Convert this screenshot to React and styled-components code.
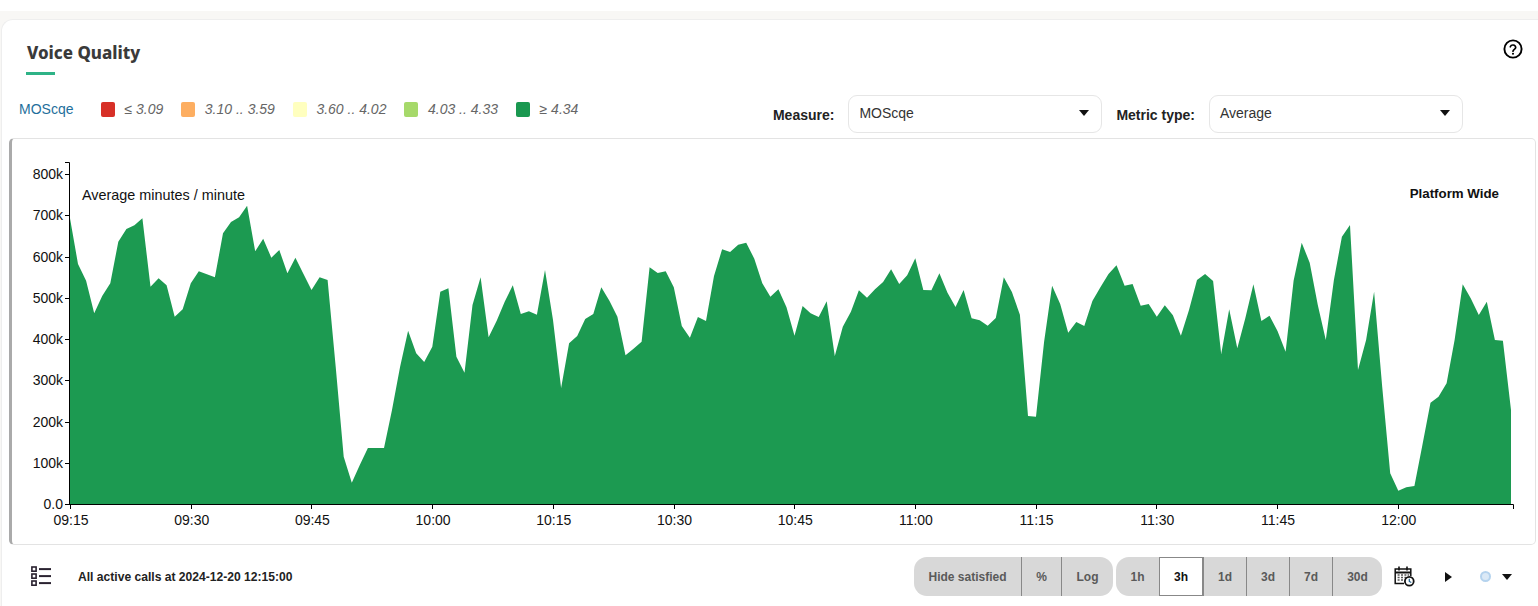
import styled, { createGlobalStyle } from "styled-components";

// ====== DATA ======
const tickLabels = ["09:15", "09:30", "09:45", "10:00", "10:15", "10:30", "10:45", "11:00", "11:15", "11:30", "11:45", "12:00"];
const yLabels = ["800k", "700k", "600k", "500k", "400k", "300k", "200k", "100k", "0.0"];

// one sample a minute, measured as 1/3 px below the top of the reference plot
const samples = [
  85, 222, 272, 370, 318, 280, 155, 117, 106, 85, 290, 265, 286, 380, 358, 280, 244, 253, 262, 130, 96, 82, 47, 184,
  146, 203, 180, 250, 203, 252, 300, 262, 270, 530, 800, 878, 825, 774, 774, 774, 660, 530, 422, 490, 516, 470, 305,
  295, 500, 548, 345, 262, 442, 392, 335, 286, 372, 364, 374, 240, 390, 594, 460, 438, 387, 372, 292, 332, 380, 496,
  476, 455, 232, 249, 244, 292, 408, 443, 381, 393, 258, 178, 186, 164, 158, 206, 280, 320, 298, 352, 437, 348, 370,
  381, 334, 498, 410, 365, 301, 323, 298, 276, 238, 282, 256, 205, 300, 301, 250, 308, 351, 300, 385, 391, 407, 384,
  262, 306, 374, 678, 680, 455, 287, 342, 428, 396, 408, 333, 292, 252, 226, 287, 282, 347, 342, 380, 346, 376, 437,
  360, 270, 252, 273, 492, 358, 475, 385, 283, 393, 377, 423, 485, 272, 158, 218, 345, 450, 270, 140, 105, 540, 450,
  305, 590, 850, 902, 892, 888, 765, 638, 620, 580, 450, 283, 325, 375, 335, 450, 452, 660,
];

const legend = [
  { color: "#d73027", label: "≤ 3.09" },
  { color: "#fdae61", label: "3.10 .. 3.59" },
  { color: "#ffffbf", label: "3.60 .. 4.02" },
  { color: "#a6d96a", label: "4.03 .. 4.33" },
  { color: "#1a9850", label: "≥ 4.34" },
];

// chart geometry, in svg pixels
const CHART_W = 1523;
const CHART_H = 404;
const LEFT = 58;
const BASE = 365;
const STEP_X = 8.05;
const TICK_X = 120.7;
const STEP_Y = 41.25;
const RIGHT = 1501;

const areaPoints = () => {
  const pts = samples.map((s, i) => `${(LEFT + i * STEP_X).toFixed(1)},${(51 + s / 3).toFixed(1)}`);
  const lastX = (LEFT + (samples.length - 1) * STEP_X).toFixed(1);
  return `${LEFT},${BASE} ${pts.join(" ")} ${lastX},${BASE}`;
};

// ====== STYLED COMPONENTS ======
const GlobalStyle = createGlobalStyle`
  html, body {
    margin: 0;
    padding: 0;
    background: #ffffff;
    overflow: hidden;
  }
  * {
    box-sizing: border-box;
  }
`;

const Page = styled.div`
  width: 1538px;
  height: 606px;
  padding-top: 11px;
  overflow: hidden;
  font-family: "Liberation Sans", Arial, sans-serif;
`;

const Shell = styled.div`
  height: 595px;
  padding: 8px 0 0 1px;
  background: #f8f7f5;
`;

const Card = styled.section`
  height: 587px;
  background: #ffffff;
  border-top: 1px solid #eeeeee;
  border-left: 1px solid #eeeeee;
  border-top-left-radius: 12px;
  display: flex;
  flex-direction: column;
`;

const Header = styled.header`
  height: 75px;
  padding: 20px 15px 0 25px;
  display: flex;
  justify-content: space-between;
  align-items: flex-start;
`;

const TitleBlock = styled.div`
  display: flex;
  flex-direction: column;
`;

const Title = styled.h1`
  margin: 0;
  font-family: "Noto Sans", sans-serif;
  font-size: 16.9px;
  line-height: 26px;
  font-weight: 800;
  color: #3a3a3a;
`;

const Underline = styled.div`
  width: 29px;
  height: 3px;
  margin: 6px 0 0 -1px;
  background: #2eb387;
`;

const HelpButton = styled.div`
  width: 20px;
  height: 20px;
  margin-top: -1px;
  color: #000000;
`;

const FilterRow = styled.div`
  height: 38px;
  display: flex;
  align-items: flex-start;
  padding-right: 75px;
`;

const Legend = styled.div`
  display: flex;
  align-items: center;
  height: 28px;
  padding-left: 17px;
  font-size: 14px;
`;

const LegendTitle = styled.span`
  width: 82px;
  color: #1f6f9c;
`;

const LegendItem = styled.div`
  display: flex;
  align-items: center;
  gap: 9.5px;
  margin-right: 18px;
  font-size: 14px;
  font-style: italic;
  color: #666666;
`;

const Swatch = styled.span`
  width: 14px;
  height: 15px;
  margin-top: 1px;
  border-radius: 2px;
  background: ${({ $color }) => $color};
`;

const Filters = styled.div`
  margin-left: auto;
  display: flex;
  align-items: center;
`;

const FilterLabel = styled.label`
  font-size: 14px;
  font-weight: 700;
  color: #222222;
  margin-top: 2px;
  margin-right: 14px;
`;

const Select = styled.div`
  width: 254px;
  height: 38px;
  margin-right: 14px;
  padding: 0 12px 2px 10px;
  border: 1px solid #e6e6e6;
  border-radius: 9px;
  display: flex;
  align-items: center;
  justify-content: space-between;
  font-size: 14px;
  color: #333333;

  &:last-child {
    margin-right: 0;
  }
`;

const Caret = styled.span`
  width: 0;
  height: 0;
  border-left: 5px solid transparent;
  border-right: 5px solid transparent;
  border-top: 6px solid #111111;
`;

const ChartCard = styled.div`
  width: 1527px;
  height: 407px;
  margin: 5px 0 0 7px;
  background: #ffffff;
  border: 1px solid #e3e3e3;
  border-left: 3px solid #aaaaaa;
  border-radius: 5px;
  overflow: hidden;
`;

const ChartSvg = styled.svg`
  display: block;
  font-family: "Liberation Sans", Arial, sans-serif;
  font-size: 14px;
  fill: #111111;
`;

const Footer = styled.footer`
  flex: 1;
  display: flex;
  align-items: center;
  padding: 2px 26px 0 29px;
  height: 58px;
`;

const ListIcon = styled.svg`
  display: block;
  margin-top: -2px;
  margin-right: 27px;
  color: #2a2230;
`;

const StatusText = styled.span`
  font-size: 12.1px;
  font-weight: 700;
  color: #222222;
`;

const Controls = styled.div`
  margin-left: auto;
  display: flex;
  align-items: center;
`;

const ButtonGroup = styled.div`
  height: 39px;
  margin-right: 3px;
  display: flex;
  background: #d8d8d8;
  border-radius: 13px;
  overflow: hidden;
`;

const GroupButton = styled.div`
  width: ${({ $width }) => $width}px;
  display: flex;
  align-items: center;
  justify-content: center;
  font-size: 12px;
  font-weight: 700;
  color: ${({ $active }) => ($active ? "#111111" : "#5a5a5a")};
  background: ${({ $active }) => ($active ? "#ffffff" : "transparent")};
  border: ${({ $active }) => ($active ? "1px solid #888888" : "none")};
  border-left: 1px solid #888888;

  &:first-child {
    border-left: none;
  }
`;

const IconButton = styled.div`
  display: flex;
  align-items: center;
  margin-left: ${({ $gap }) => $gap}px;
`;

const PlayMark = styled.span`
  width: 0;
  height: 0;
  border-top: 5.5px solid transparent;
  border-bottom: 5.5px solid transparent;
  border-left: 7px solid #111111;
`;

const StatusDot = styled.span`
  width: 11px;
  height: 11px;
  border-radius: 50%;
  background: #dbe9f6;
  border: 2px solid #b5d3ee;
`;

// ====== COMPONENTE ======
const HelpIcon = () => (
  <svg width="20" height="20" viewBox="0 0 20 20" fill="none" stroke="currentColor">
    <circle cx="10" cy="10" r="8.6" strokeWidth="1.9" />
    <path d="M7.3 7.8a2.8 2.8 0 0 1 5.4.7c0 1.7-2.7 2-2.7 3.7" strokeWidth="1.7" strokeLinecap="round" />
    <circle cx="10" cy="14.8" r="1.05" fill="currentColor" stroke="none" />
  </svg>
);

const ListGlyph = () => (
  <ListIcon width="20" height="20" viewBox="0 0 20 20" fill="none" stroke="currentColor">
    {[1, 8, 15].map((y) => (
      <g key={y}>
        <rect x="0.9" y={y} width="4.2" height="4.2" strokeWidth="1.6" />
        <path d={`M8 ${y + 2.1}h12`} strokeWidth="2" />
      </g>
    ))}
  </ListIcon>
);

const CalendarIcon = () => (
  <svg width="21" height="21" viewBox="0 0 21 21" fill="none" stroke="#111111">
    <path d="M10 17.5H1.2V3h15.6v7" strokeWidth="1.5" />
    <path d="M1.2 6.5h15.6" strokeWidth="2" />
    <path d="M5 .6v4M13 .6v4" strokeWidth="1.6" />
    <path d="M3.6 9h2M7 9h2M10.4 9h2M13.6 9h1.6M3.6 11.5h2M7 11.5h2M10.4 11.5h1.6M3.6 14h2M7 14h2" stroke="#555555" strokeWidth="1.4" />
    <circle cx="15.3" cy="15.3" r="4.4" fill="#ffffff" strokeWidth="1.8" />
    <path d="M15.3 12.8v2.7l2 1" stroke="#1f5f8c" strokeWidth="1.2" />
  </svg>
);

const VoiceChart = () => {
  const ticks = tickLabels.map((label, i) => ({ label, x: LEFT + i * TICK_X }));
  return (
    <ChartSvg width={CHART_W} height={CHART_H} viewBox={`0 0 ${CHART_W} ${CHART_H}`}>
      <polygon points={areaPoints()} fill="#1c9a51" stroke="none" />

      <path d={`M${LEFT - 5} 23.5H${LEFT - 0.5}V${BASE}`} fill="none" stroke="#000" />
      {yLabels.map((label, i) => {
        const y = 35 + i * STEP_Y;
        return (
          <g key={label}>
            <path d={`M${LEFT - 5} ${Math.round(y) + 0.5}H${LEFT}`} stroke="#000" />
            <text x={LEFT - 7} y={y + 5} textAnchor="end">{label}</text>
          </g>
        );
      })}

      <path d={`M${LEFT + 0.5} 370V${BASE + 0.5}H${RIGHT + 0.5}V370`} fill="none" stroke="#000" />
      {ticks.map(({ label, x }) => (
        <g key={label}>
          <path d={`M${Math.round(x) + 0.5} ${BASE}v5`} stroke="#000" />
          <text x={x + 1} y={BASE + 21} textAnchor="middle">{label}</text>
        </g>
      ))}

      <text x="70" y="61" fontSize="14.4">Average minutes / minute</text>
      <text x="1487" y="59" textAnchor="end" fontSize="13.3" fontWeight="700">Platform Wide</text>
    </ChartSvg>
  );
};

export default function App() {
  return (
    <Page>
      <GlobalStyle />
      <Shell>
        <Card>
          <Header>
            <TitleBlock>
              <Title>Voice Quality</Title>
              <Underline />
            </TitleBlock>
            <HelpButton>
              <HelpIcon />
            </HelpButton>
          </Header>

          <FilterRow>
            <Legend>
              <LegendTitle>MOScqe</LegendTitle>
              {legend.map((item) => (
                <LegendItem key={item.label}>
                  <Swatch $color={item.color} />
                  {item.label}
                </LegendItem>
              ))}
            </Legend>
            <Filters>
              <FilterLabel>Measure:</FilterLabel>
              <Select>
                MOScqe
                <Caret />
              </Select>
              <FilterLabel>Metric type:</FilterLabel>
              <Select>
                Average
                <Caret />
              </Select>
            </Filters>
          </FilterRow>

          <ChartCard>
            <VoiceChart />
          </ChartCard>

          <Footer>
            <ListGlyph />
            <StatusText>All active calls at 2024-12-20 12:15:00</StatusText>
            <Controls>
              <ButtonGroup>
                <GroupButton $width={107}>Hide satisfied</GroupButton>
                <GroupButton $width={40}>%</GroupButton>
                <GroupButton $width={52}>Log</GroupButton>
              </ButtonGroup>
              <ButtonGroup>
                <GroupButton $width={43}>1h</GroupButton>
                <GroupButton $width={44} $active>3h</GroupButton>
                <GroupButton $width={43}>1d</GroupButton>
                <GroupButton $width={43}>3d</GroupButton>
                <GroupButton $width={43}>7d</GroupButton>
                <GroupButton $width={50}>30d</GroupButton>
              </ButtonGroup>
              <IconButton $gap={9}>
                <CalendarIcon />
              </IconButton>
              <IconButton $gap={30}>
                <PlayMark />
              </IconButton>
              <IconButton $gap={28}>
                <StatusDot />
              </IconButton>
              <IconButton $gap={11}>
                <Caret />
              </IconButton>
            </Controls>
          </Footer>
        </Card>
      </Shell>
    </Page>
  );
}
